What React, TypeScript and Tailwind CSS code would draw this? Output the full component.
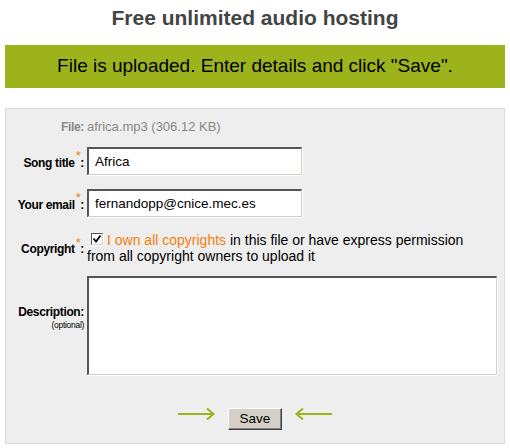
import React from "react";

const Req = () => <sup className="text-[#f27f0c] font-normal text-[13px] ml-[1px]">*</sup>;

const Arrow = ({ dir }: { dir: "right" | "left" }) => (
  <svg width="37" height="12" viewBox="0 0 37 12" className="block">
    {dir === "right" ? (
      <g stroke="#9cb31b" strokeWidth="2" fill="none">
        <line x1="0" y1="6" x2="35" y2="6" />
        <polyline points="29,0.5 35.5,6 29,11.5" />
      </g>
    ) : (
      <g stroke="#9cb31b" strokeWidth="2" fill="none">
        <line x1="2" y1="6" x2="37" y2="6" />
        <polyline points="8,0.5 1.5,6 8,11.5" />
      </g>
    )}
  </svg>
);

const inset =
  "border-t-2 border-l-2 border-r border-b border-t-[#555] border-l-[#555] border-r-[#d4d0c8] border-b-[#d4d0c8] shadow-[1px_1px_0_#fff] bg-white";

const label = "w-[78px] text-right text-[12px] leading-[16px] font-bold text-black tracking-[-0.35px]";

export default function App() {
  return (
    <div className="w-[510px] h-[448px] bg-white font-['Liberation_Sans',Arial,sans-serif] overflow-hidden">
      <div className="pt-[6px] text-center text-[21px] leading-[24px] font-bold text-[#444]">
        Free unlimited audio hosting
      </div>
      <div className="mt-[15px] mx-[5px] h-[43px] bg-[#9cb31b] flex items-center justify-center text-[19px] text-black">
        File is uploaded. Enter details and click "Save".
      </div>
      <div className="mt-[20px] mx-[5px] h-[336px] border border-[#ddd] bg-[#eee] pt-[10px]">
        {/* File row */}
        <div className="flex items-center leading-[16px]">
          <div className="w-[78px] text-right text-[12px] font-bold text-[#888] tracking-[-0.35px]">File:</div>
          <div className="ml-[3px] text-[13px] text-[#888]">africa.mp3 (306.12 KB)</div>
        </div>

        {/* Song title */}
        <div className="mt-[12px] flex items-center">
          <div className={`${label} pt-[3px]`}>
            Song title<Req />:
          </div>
          <input
            readOnly
            defaultValue="Africa"
            className={`ml-[3px] w-[215px] h-[28px] px-[6px] text-[13.5px] text-black outline-none ${inset}`}
          />
        </div>

        {/* Email */}
        <div className="mt-[14px] flex items-center">
          <div className={`${label} pt-[3px]`}>
            Your email<Req />:
          </div>
          <input
            readOnly
            defaultValue="fernandopp@cnice.mec.es"
            className={`ml-[3px] w-[215px] h-[28px] px-[6px] text-[13.5px] text-black outline-none ${inset}`}
          />
        </div>

        {/* Copyright */}
        <div className="mt-[15px] flex items-center">
          <div className={`${label} pt-[2px]`}>
            Copyright<Req />:
          </div>
          <div className="ml-[3px] w-[410px] text-[14px] leading-[16px] text-black">
            <span className="inline-block w-[12px] h-[12px] ml-[4px] mr-[4px] align-[0px] overflow-hidden bg-white border-t border-l border-t-[#555] border-l-[#555] border-r border-b border-r-[#d4d0c8] border-b-[#d4d0c8] shadow-[1px_1px_0_#fff] relative">
              <svg width="10" height="10" viewBox="0 0 10 10" className="absolute left-0 top-0">
                <polyline points="1.5,4.5 4,7.5 8.5,1.5" stroke="#000" strokeWidth="1.8" fill="none" />
              </svg>
            </span>
            <span className="text-[#f27f0c]">I own all copyrights</span> in this file or have express permission
            <br />
            from all copyright owners to upload it
          </div>
        </div>

        {/* Description */}
        <div className="mt-[12px] flex items-start">
          <div className="w-[78px] mt-[28px] text-right text-black">
            <div className="text-[12px] leading-[16px] font-bold tracking-[-0.35px]">Description:</div>
            <div className="text-[8.5px] leading-[10px] tracking-[-0.3px]">(optional)</div>
          </div>
          <textarea
            readOnly
            className={`ml-[3px] w-[410px] h-[99px] resize-none outline-none block ${inset}`}
          />
        </div>

        {/* Save */}
        <div className="mt-[33px] flex justify-center items-start gap-[13px]">
          <Arrow dir="right" />
          <button className="w-[54px] h-[22px] bg-[#d4d0c8] border border-t-white border-l-white border-r-[#404040] border-b-[#404040] shadow-[inset_-1px_-1px_0_#808080] text-[13.5px] leading-[18px] text-black">
            Save
          </button>
          <Arrow dir="left" />
        </div>
      </div>
    </div>
  );
}
